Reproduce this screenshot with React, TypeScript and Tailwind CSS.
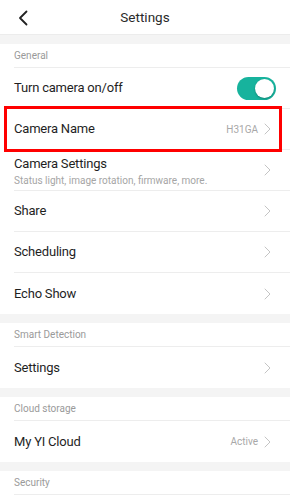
import React from "react";

const Chevron = () => (
  <svg width="7" height="12" viewBox="0 0 7 12" fill="none" className="shrink-0">
    <path d="M1 1l5 5-5 5" stroke="#c4c4c4" strokeWidth="1" strokeLinecap="round" strokeLinejoin="round" />
  </svg>
);

const Band = () => <div className="h-[9px] bg-[#f4f4f4]" />;

const SectionHeader = ({ title }: { title: string }) => (
  <div className="pl-[14px]">
    <div className="h-[24px] flex items-center border-b border-[#ededed] text-[10px] text-[#9a9a9a]">{title}</div>
  </div>
);

type RowProps = {
  title: string;
  sub?: string;
  value?: string;
  toggle?: boolean;
  last?: boolean;
};

const Row = ({ title, sub, value, toggle, last }: RowProps) => (
  <div className="pl-[14px]">
    <div className={`h-[41px] flex items-center pr-[19px] ${last ? "" : "border-b border-[#ededed]"}`}>
      <div className={`flex-1 min-w-0 ${sub ? "pt-[2px]" : ""}`}>
        <div className="text-[13px] tracking-[-0.2px] text-[#1f1f1f] leading-[18px]">{title}</div>
        {sub && <div className="text-[10px] text-[#a5a5a5] leading-[13px] mt-[1px] whitespace-nowrap">{sub}</div>}
      </div>
      {value && <span className="text-[10px] text-[#a8a8a8] mr-[6px]">{value}</span>}
      {toggle ? (
        <div className="w-[39px] h-[23px] rounded-full bg-[#17b39d] flex items-center justify-end pr-[2px] -mr-[5px]">
          <div className="w-[19px] h-[19px] rounded-full bg-white shadow-[0_1px_2px_rgba(0,0,0,0.25)]" />
        </div>
      ) : (
        <Chevron />
      )}
    </div>
  </div>
);

export default function App() {
  return (
    <div className="w-[290px] h-[501px] overflow-hidden bg-white font-['Roboto',sans-serif]">
      {/* Top bar */}
      <div className="h-[35px] relative flex items-center justify-center border-b border-[#ececec]">
        <svg width="10" height="16" viewBox="0 0 10 16" className="absolute left-[18px] top-[10px]" fill="none">
          <path d="M8.5 1.5L2 8l6.5 6.5" stroke="#222" strokeWidth="1.8" strokeLinecap="round" strokeLinejoin="round" />
        </svg>
        <span className="text-[13.5px] text-[#2a2a2a]">Settings</span>
      </div>
      <Band />

      {/* General */}
      <div className="relative">
        <SectionHeader title="General" />
        <Row title="Turn camera on/off" toggle />
        <Row title="Camera Name" value="H31GA" />
        <Row title="Camera Settings" sub="Status light, image rotation, firmware, more." />
        <Row title="Share" />
        <Row title="Scheduling" />
        <Row title="Echo Show" last />
        {/* highlight annotation */}
        <div className="absolute left-[4px] top-[62px] w-[278px] h-[46px] border-[3px] border-[#ff0000] pointer-events-none" />
      </div>
      <Band />

      <SectionHeader title="Smart Detection" />
      <Row title="Settings" last />
      <Band />

      <SectionHeader title="Cloud storage" />
      <Row title="My YI Cloud" value="Active" last />
      <Band />

      <SectionHeader title="Security" />
    </div>
  );
}
